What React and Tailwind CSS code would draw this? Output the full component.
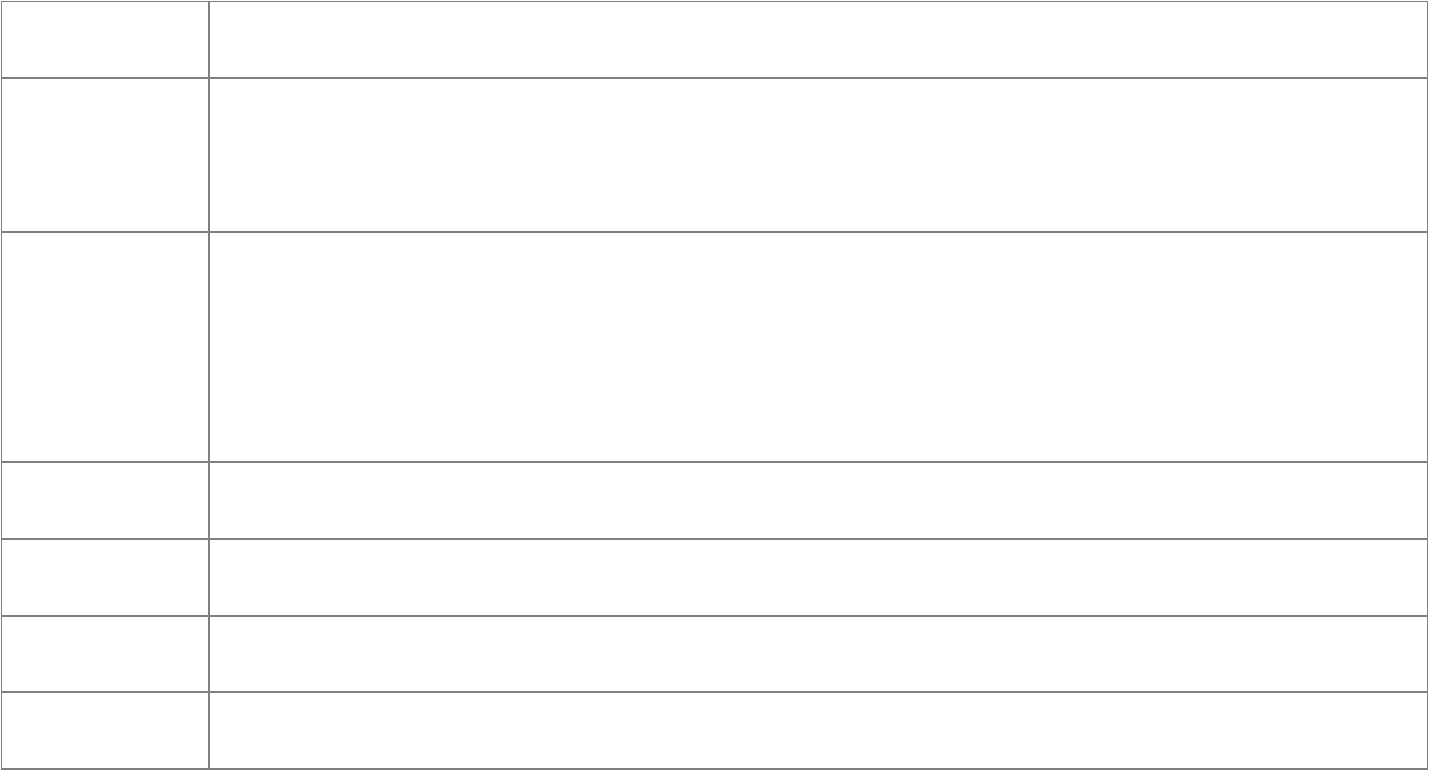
export default function App() {
  const rows = [1, 2, 3, 1, 1, 1, 1];

  return (
    <div className="h-screen w-full bg-white p-px">
      <table className="h-full w-full border-collapse">
        <tbody>
          {rows.map((span, i) => {
            const top = i === 0 ? "border-t" : "border-t-2";
            return (
              <tr key={i} style={{ height: `${(span / 10) * 100}%` }}>
                <td className={`w-[207px] border-l border-r-2 border-b-2 border-[#808080] ${top}`}></td>
                <td className={`border-l-2 border-r border-b-2 border-[#808080] ${top}`}></td>
              </tr>
            );
          })}
        </tbody>
      </table>
    </div>
  );
}
